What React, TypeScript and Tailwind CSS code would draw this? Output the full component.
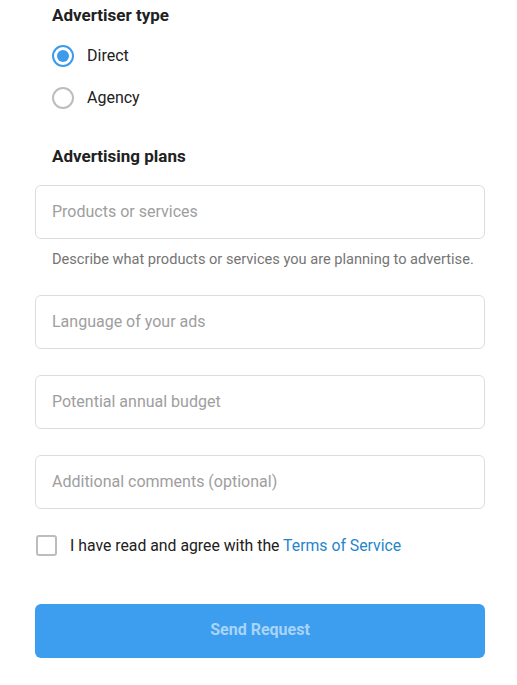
import {useState} from "react";

const fields = [
  {id: "products", placeholder: "Products or services", help: "Describe what products or services you are planning to advertise."},
  {id: "language", placeholder: "Language of your ads"},
  {id: "budget", placeholder: "Potential annual budget"},
  {id: "comments", placeholder: "Additional comments (optional)"},
];

const App = () => {
  const [type, setType] = useState("direct");
  const [agreed, setAgreed] = useState(false);

  return (
    <div className="min-h-screen bg-white font-['Roboto','Liberation_Sans',sans-serif] text-[#212121]">
      <div className="ml-[35px] w-[450px] pt-[4px]">
        <h2 className="pl-[17px] text-[17px] font-bold leading-[22px]">Advertiser type</h2>

        {/* RADIOS */}
        <div className="mt-[9px]">
          {[
            {id: "direct", label: "Direct"},
            {id: "agency", label: "Agency"},
          ].map((opt) => (
            <label
              key={opt.id}
              className="flex h-[42px] cursor-pointer items-center pl-[17px]"
              onClick={() => setType(opt.id)}
            >
              <span
                className={`flex h-[22px] w-[22px] items-center justify-center rounded-full border-2 ${
                  type === opt.id ? "border-[#3d9be9]" : "border-[#bdbdbd]"
                }`}
              >
                {type === opt.id && <span className="h-[12px] w-[12px] rounded-full bg-[#3d9be9]"></span>}
              </span>
              <span className="ml-[13px] text-base">{opt.label}</span>
            </label>
          ))}
        </div>

        <h2 className="mt-[26px] pl-[17px] text-[17px] font-bold leading-[22px]">Advertising plans</h2>

        {/* INPUTS */}
        <div className="mt-[18px]">
          {fields.map((f, i) => (
            <div key={f.id} className={i === 0 ? "" : "mt-[26px]"}>
              <input
                placeholder={f.placeholder}
                className="h-[54px] w-full rounded-[6px] border border-[#dcdcdc] px-[16px] pb-[1px] text-base outline-none placeholder:text-[#9e9e9e]"
              />
              {f.help && (
                <p className="mt-[10px] pl-[17px] text-[14.6px] leading-[20px] text-[#757575]">{f.help}</p>
              )}
            </div>
          ))}
        </div>

        {/* TERMS */}
        <label className="mt-[25px] flex h-[22px] cursor-pointer items-center" onClick={() => setAgreed(!agreed)}>
          <span
            className={`ml-[1px] h-[21px] w-[21px] rounded-[3px] border-2 ${
              agreed ? "border-[#3d9be9] bg-[#3d9be9]" : "border-[#bdbdbd]"
            }`}
          ></span>
          <span className="ml-[13px] pt-[2px] text-[15.8px]">
            I have read and agree with the <a className="text-[#1f86c9]">Terms of Service</a>
          </span>
        </label>

        <button className="mt-[48px] h-[54px] w-full rounded-[6px] bg-[#3d9eef] pb-[2px] text-base font-bold text-[#a9d4f8]">
          Send Request
        </button>
      </div>
    </div>
  );
};
export default App;
